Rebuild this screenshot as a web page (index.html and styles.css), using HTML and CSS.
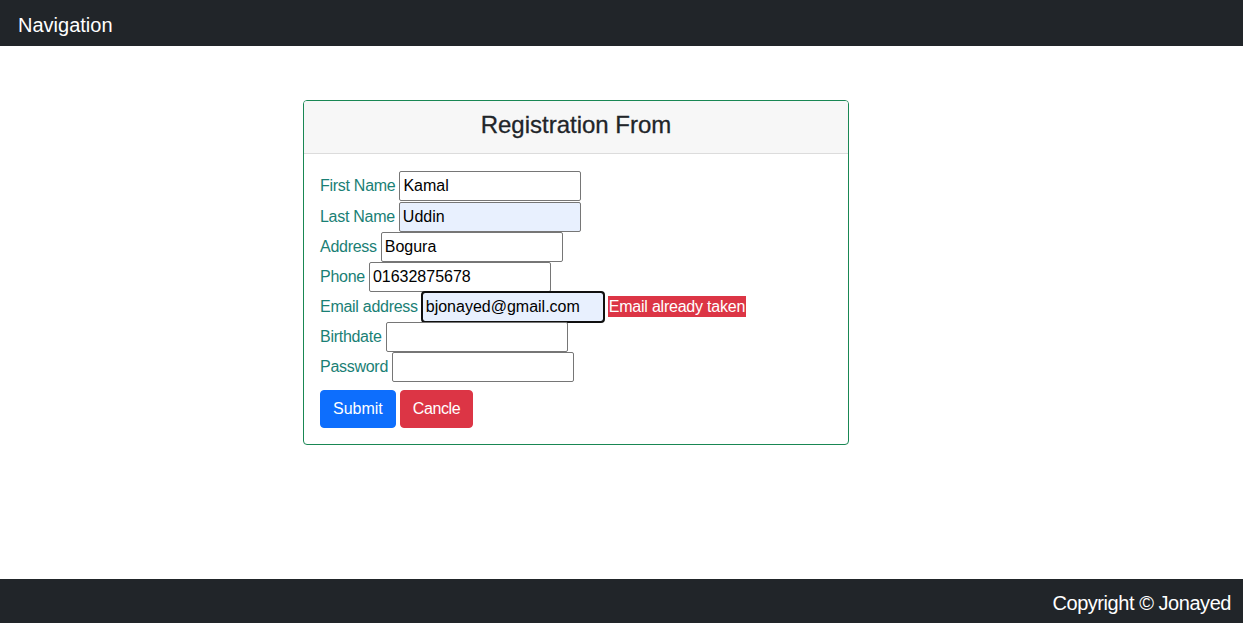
FILE: index.html
```html
<!DOCTYPE html>
<html>
<head>
<meta charset="utf-8">
<title>Registration</title>
<link rel="stylesheet" href="styles.css">
</head>
<body>
<header class="navbar"><span class="brand">Navigation</span></header>
<main class="content">
  <div class="card">
    <div class="card-header"><h3 class="title">Registration From</h3></div>
    <form class="card-body">
      <div class="row first"><label class="lbl">First Name</label> <input class="field" type="text" value="Kamal"></div>
      <div class="row"><label class="lbl">Last Name</label> <input class="field autofill" type="text" value="Uddin"></div>
      <div class="row"><label class="lbl">Address</label> <input class="field" type="text" value="Bogura"></div>
      <div class="row"><label class="lbl">Phone</label> <input class="field" type="text" value="01632875678"></div>
      <div class="row"><label class="lbl">Email address</label> <input class="field autofill focused" type="text" value="bjonayed@gmail.com"> <span class="error">Email already taken</span></div>
      <div class="row"><label class="lbl">Birthdate</label> <input class="field" type="text" value=""></div>
      <div class="row"><label class="lbl">Password</label> <input class="field" type="password" value=""></div>
      <div class="actions"><button type="button" class="btn btn-primary">Submit</button> <button type="button" class="btn btn-danger">Cancle</button></div>
    </form>
  </div>
</main>
<footer class="footer"><span class="copy">Copyright © Jonayed</span></footer>
</body>
</html>
```
FILE: styles.css
```css
* { box-sizing: border-box; }
html, body { margin: 0; padding: 0; }
body {
  font-family: "Liberation Sans", Arial, sans-serif;
  font-size: 16px;
  line-height: 1.5;
  color: #212529;
  background: #fff;
  height: 623px;
  display: flex;
  flex-direction: column;
}
.navbar {
  height: 46px;
  background: #212529;
  display: flex;
  align-items: center;
  padding-left: 18px;
  padding-top: 3px;
}
.brand { color: #fff; font-size: 20px; line-height: 30px; }
.content {
  flex: 1;
  padding-top: 54px;
  padding-left: 303px;
}
.card {
  width: 546px;
  border: 1px solid #198754;
  border-radius: 4px;
  overflow: hidden;
}
.card-header {
  background: #f7f7f7;
  border-bottom: 1px solid #dcdcdc;
  padding: 6px 16px 10px;
  text-align: center;
}
.title {
  margin: 0;
  font-size: 24px;
  font-weight: 500;
  line-height: 36px;
  color: #212529;
  -webkit-text-stroke: 0.3px #212529;
}
.card-body {
  padding: 16px;
  margin: 0;
}
.row {
  height: 30px;
  display: flex;
  align-items: baseline;
  gap: 4px;
}
.row.first { height: 32px; padding-top: 1px; }
.lbl { color: #1a8075; letter-spacing: -0.28px; }
.field {
  width: 182px;
  height: 30px;
  font-family: inherit;
  font-size: 16px;
  color: #000;
  background: #fff;
  border: 1px solid #767676;
  border-radius: 2px;
  padding: 1px 3px;
  margin: 0;
  outline: none;
}
.autofill { background: #e8f0fe; }
.focused { outline: 2px solid #101010; outline-offset: -1px; border-radius: 3px; }
.error {
  background: #dc3545;
  color: #fff;
  line-height: 21px;
  padding: 0 1px;
  letter-spacing: -0.22px;
}
.actions {
  margin-top: 8px;
  display: flex;
  gap: 4px;
}
.btn {
  font-family: inherit;
  font-size: 16px;
  line-height: 24px;
  padding: 6px 12px;
  border: 1px solid transparent;
  border-radius: 4px;
  color: #fff;
  height: 38px;
}
.btn-primary { background: #0d6efd; border-color: #0d6efd; }
.btn-danger { background: #dc3545; border-color: #dc3545; letter-spacing: -0.4px; }
.footer {
  height: 44px;
  background: #212529;
  display: flex;
  align-items: center;
  justify-content: flex-end;
  padding-right: 12px;
  padding-top: 4px;
}
.copy { color: #fff; font-size: 20px; font-weight: 300; letter-spacing: -0.45px; }
```
